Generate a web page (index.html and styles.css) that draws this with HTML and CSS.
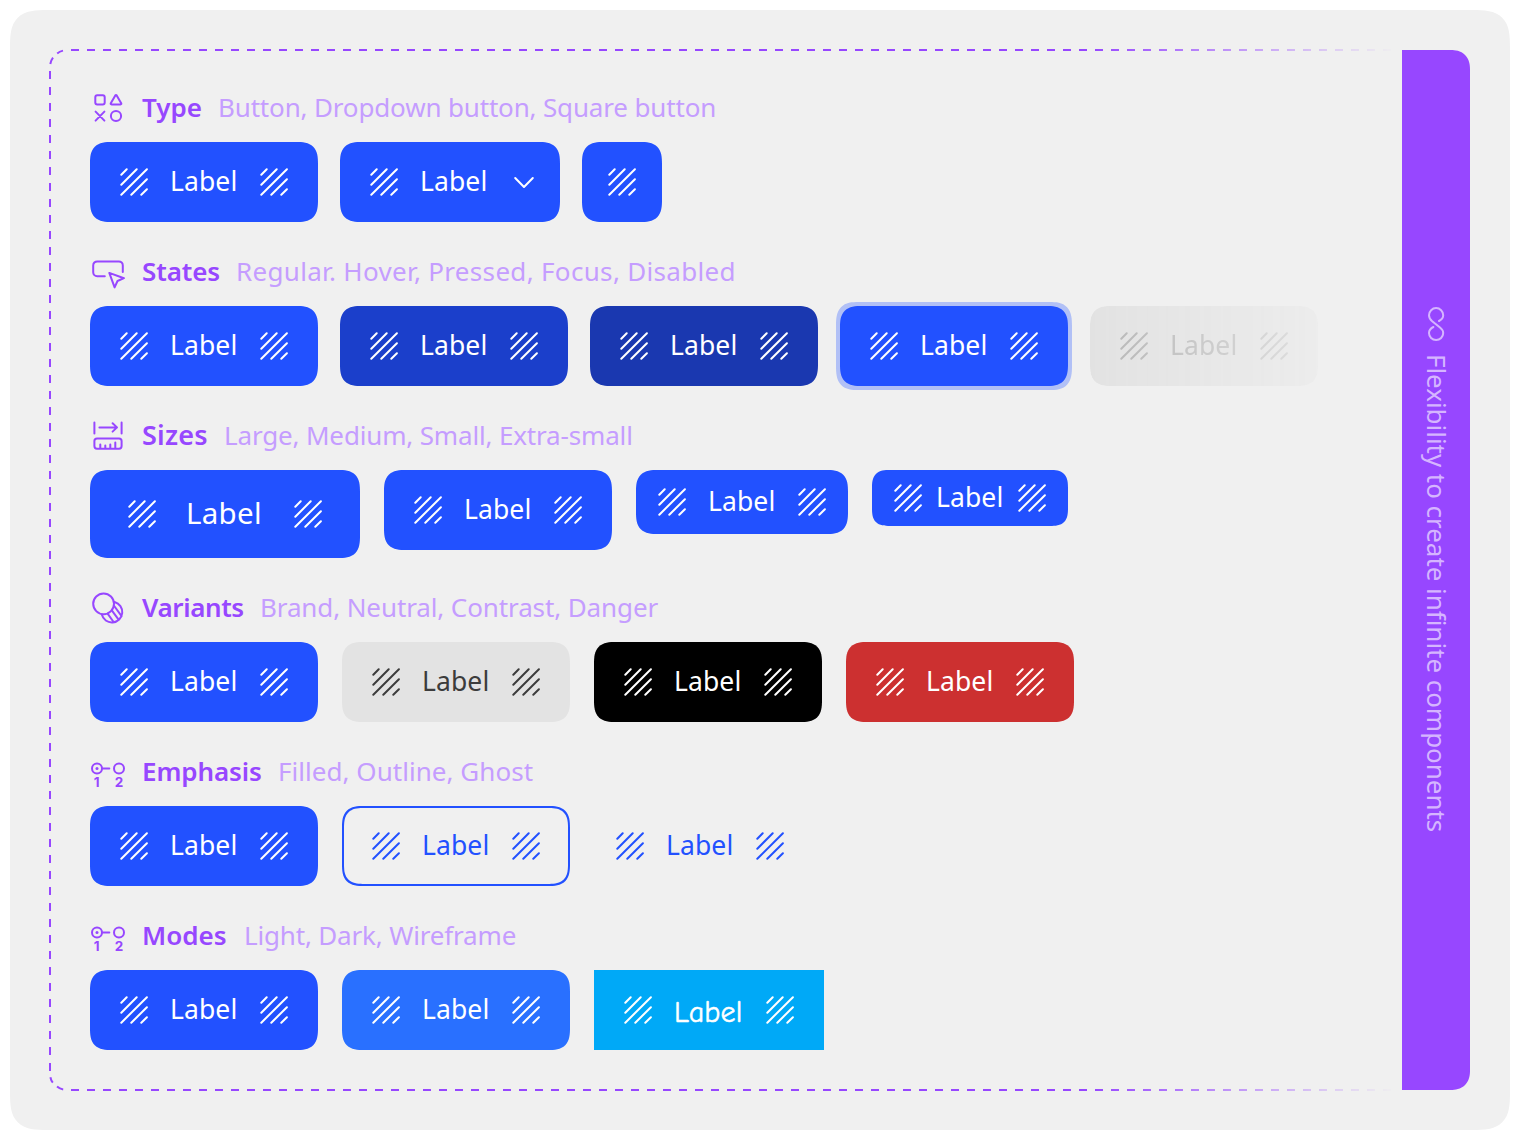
FILE: index.html
```
<!DOCTYPE html>
<html lang="en">
<head>
<meta charset="utf-8">
<title>Button properties</title>
<link rel="stylesheet" href="styles.css">
</head>
<body>
<svg class="defs" aria-hidden="true">
  <symbol id="pattern" viewBox="0 0 28 28"><path d="M1.3 6.7 6.7 1.3M1.3 16.7 16.7 1.3M1.3 26.7 26.9 1.3M11.3 26.7 26.9 11.3M21.3 26.7 26.9 21.3"/></symbol>
  <symbol id="chevron" viewBox="0 0 28 28"><path d="M5.2 10 14 19l8.8-9"/></symbol>
</svg>
<main class="card">
  <div class="board">
    <svg class="frame" viewBox="0 0 1353 1042" aria-hidden="true">
      <path d="M22 1H1400"/><path d="M1 22V1022"/><path d="M22 1041H1400"/>
      <path d="M14 1.6Q10.5 2.4 8.2 4.4M4 8.6Q1.8 11.5 1.3 15M1.4 1028.2Q2 1031.4 3.8 1033.6M8 1037.6Q10.8 1040 14.2 1040.5"/>
    </svg>
    <div class="content">

      <section class="group type">
        <h2 class="heading"><svg class="glyph" viewBox="0 0 36 36"><rect x="5.3" y="5.3" width="9.4" height="9.2" rx="2"/><path d="M25.3 5.4Q26 4.4 26.7 5.4L31.2 13.2Q31.7 14.4 30.5 14.4H21.5Q20.3 14.4 20.8 13.2ZM5.6 21.6 14.4 30.6M14.4 21.6 5.6 30.6"/><circle cx="26" cy="26" r="5.1"/></svg><span class="name">Type</span><span class="values">Button, Dropdown button, Square button</span></h2>
        <div class="row tight">
          <div class="btn"><svg class="icon"><use href="#pattern"/></svg><span class="label">Label</span><svg class="icon"><use href="#pattern"/></svg></div>
          <div class="btn dropdown"><svg class="icon"><use href="#pattern"/></svg><span class="label">Label</span><svg class="icon"><use href="#chevron"/></svg></div>
          <div class="btn square"><svg class="icon"><use href="#pattern"/></svg></div>
        </div>
      </section>

      <section class="group states">
        <h2 class="heading"><svg class="glyph" viewBox="0 0 36 36"><path d="M14.8 22.3H7.2A4 4 0 0 1 3.2 18.3V11.4A4 4 0 0 1 7.2 7.4H28.8A4 4 0 0 1 32.8 11.4V18M19.3 18.9 34 24.2 27.5 27 24.6 33.4Z"/></svg><span class="name">States</span><span class="values">Regular. Hover, Pressed, Focus, Disabled</span></h2>
        <div class="row tight">
          <div class="btn"><svg class="icon"><use href="#pattern"/></svg><span class="label">Label</span><svg class="icon"><use href="#pattern"/></svg></div>
          <div class="btn hover"><svg class="icon"><use href="#pattern"/></svg><span class="label">Label</span><svg class="icon"><use href="#pattern"/></svg></div>
          <div class="btn pressed"><svg class="icon"><use href="#pattern"/></svg><span class="label">Label</span><svg class="icon"><use href="#pattern"/></svg></div>
          <div class="btn focus"><svg class="icon"><use href="#pattern"/></svg><span class="label">Label</span><svg class="icon"><use href="#pattern"/></svg></div>
          <div class="btn disabled"><svg class="icon"><use href="#pattern"/></svg><span class="label">Label</span><svg class="icon"><use href="#pattern"/></svg></div>
        </div>
      </section>

      <section class="group sizes">
        <h2 class="heading"><svg class="glyph" viewBox="0 0 36 36"><path d="M4.4 4.4V15.4M31.6 4.4V15.4M9.4 9.4H27M22.6 5.2 27 9.4 22.6 13.6M10.3 30V26.4M15.3 30V27.6M20.3 30V26.4M25.3 30V24.6"/><rect x="4.4" y="20.5" width="27.2" height="10.2" rx="2.6"/></svg><span class="name">Sizes</span><span class="values">Large, Medium, Small, Extra-small</span></h2>
        <div class="row">
          <div class="btn large"><svg class="icon"><use href="#pattern"/></svg><span class="label">Label</span><svg class="icon"><use href="#pattern"/></svg></div>
          <div class="btn"><svg class="icon"><use href="#pattern"/></svg><span class="label">Label</span><svg class="icon"><use href="#pattern"/></svg></div>
          <div class="btn small"><svg class="icon"><use href="#pattern"/></svg><span class="label">Label</span><svg class="icon"><use href="#pattern"/></svg></div>
          <div class="btn xsmall"><svg class="icon"><use href="#pattern"/></svg><span class="label">Label</span><svg class="icon"><use href="#pattern"/></svg></div>
        </div>
      </section>

      <section class="group variants">
        <h2 class="heading"><svg class="glyph" viewBox="0 0 36 36"><circle cx="13.6" cy="13.8" r="10.4"/><path d="M24.6 12A10.4 10.4 0 1 1 11.8 24.6M24.2 16 31.6 26.2M21.8 20.4 28.6 29.6M17.6 23.6 23.6 32"/></svg><span class="name">Variants</span><span class="values">Brand, Neutral, Contrast, Danger</span></h2>
        <div class="row">
          <div class="btn"><svg class="icon"><use href="#pattern"/></svg><span class="label">Label</span><svg class="icon"><use href="#pattern"/></svg></div>
          <div class="btn neutral"><svg class="icon"><use href="#pattern"/></svg><span class="label">Label</span><svg class="icon"><use href="#pattern"/></svg></div>
          <div class="btn contrast"><svg class="icon"><use href="#pattern"/></svg><span class="label">Label</span><svg class="icon"><use href="#pattern"/></svg></div>
          <div class="btn danger"><svg class="icon"><use href="#pattern"/></svg><span class="label">Label</span><svg class="icon"><use href="#pattern"/></svg></div>
        </div>
      </section>

      <section class="group emphasis">
        <h2 class="heading"><svg class="glyph" viewBox="0 0 36 36"><circle cx="7" cy="14.4" r="5"/><circle class="dot" cx="7" cy="14.4" r="1.5"/><path d="M12.5 14.4H19.3"/><circle cx="29" cy="14.4" r="5"/><text x="6.6" y="33.4">1</text><text x="29" y="33.4">2</text></svg><span class="name">Emphasis</span><span class="values">Filled, Outline, Ghost</span></h2>
        <div class="row">
          <div class="btn"><svg class="icon"><use href="#pattern"/></svg><span class="label">Label</span><svg class="icon"><use href="#pattern"/></svg></div>
          <div class="btn outline"><svg class="icon"><use href="#pattern"/></svg><span class="label">Label</span><svg class="icon"><use href="#pattern"/></svg></div>
          <div class="btn ghost"><svg class="icon"><use href="#pattern"/></svg><span class="label">Label</span><svg class="icon"><use href="#pattern"/></svg></div>
        </div>
      </section>

      <section class="group modes">
        <h2 class="heading"><svg class="glyph" viewBox="0 0 36 36"><circle cx="7" cy="14.4" r="5"/><circle class="dot" cx="7" cy="14.4" r="1.5"/><path d="M12.5 14.4H19.3"/><circle cx="29" cy="14.4" r="5"/><text x="6.6" y="33.4">1</text><text x="29" y="33.4">2</text></svg><span class="name">Modes</span><span class="values">Light, Dark, Wireframe</span></h2>
        <div class="row">
          <div class="btn"><svg class="icon"><use href="#pattern"/></svg><span class="label">Label</span><svg class="icon"><use href="#pattern"/></svg></div>
          <div class="btn dark"><svg class="icon"><use href="#pattern"/></svg><span class="label">Label</span><svg class="icon"><use href="#pattern"/></svg></div>
          <div class="btn wireframe"><svg class="icon"><use href="#pattern"/></svg><span class="label">Label</span><svg class="icon"><use href="#pattern"/></svg></div>
        </div>
      </section>

    </div>
    <aside class="panel">
      <svg class="infinity" viewBox="0 0 36 36"><path d="M21 15C23.6 13.6 25.2 12 25.2 9.2A7.1 7.1 0 0 0 11 9.2C11 12 12.4 13.6 14.2 15.2L22 21.6C24 23.2 25.2 24.8 25.2 27A7.1 7.1 0 0 1 11 27C11 24.2 12.6 22.4 15.4 21"/></svg>
      <span class="motto">Flexibility to create infinite components</span>
    </aside>
  </div>
</main>
</body>
</html>
```
FILE: styles.css
```
:root {
  --brand: #2251ff;
  --purple: #9747ff;
  --surface: #f0f0f0;
}

* { box-sizing: border-box; }

body {
  margin: 0;
  padding: 10px;
  background: #fff;
  font-family: "Proxima Nova", "Noto Sans", sans-serif;
  font-size: 26px;
  line-height: 36px;
}

.defs { position: absolute; width: 0; height: 0; }

svg {
  display: block;
  flex: none;
  fill: none;
  stroke: currentColor;
  stroke-width: 2;
  stroke-linecap: round;
  stroke-linejoin: round;
}

.card {
  width: 1500px;
  height: 1120px;
  padding: 40px;
  border-radius: 38px;
  corner-shape: superellipse(1.6);
  background: var(--surface);
}

.board {
  position: relative;
  display: flex;
  justify-content: space-between;
  height: 1040px;
}

.frame {
  position: absolute;
  left: -1px;
  top: -1px;
  width: 1353px;
  height: 1042px;
  color: var(--purple);
  stroke-linecap: butt;
  stroke-dasharray: 8 8;
  mask-image: linear-gradient(to right, #000 1040px, transparent 1346px);
}

.content {
  display: flex;
  flex-direction: column;
  gap: 32px;
  padding: 40px;
}

.group {
  display: flex;
  flex-direction: column;
  gap: 16px;
}

.heading {
  display: flex;
  height: 36px;
  margin: 0;
  color: var(--purple);
  font-size: 26px;
  font-weight: 600;
  line-height: 34px;
  white-space: nowrap;
}

.glyph { width: 36px; height: 36px; margin-right: 16px; }
.dot { fill: currentColor; stroke: none; }
text {
  fill: currentColor;
  stroke: none;
  font: 700 13.5px Inter, sans-serif;
  text-anchor: middle;
}

.name { margin-right: 16px; }
.values { color: #c59dff; font-weight: 400; }

.type .name { width: 60px; }
.states .name { width: 78px; letter-spacing: -.1px; }
.sizes .name { width: 66px; font-size: 27px; letter-spacing: .25px; }
.variants .name { width: 102px; letter-spacing: -.4px; }
.emphasis .name { width: 120px; letter-spacing: -.1px; }
.modes .name { width: 86px; }
.type .values { letter-spacing: -.16px; }
.states .values { letter-spacing: .32px; }
.sizes .values { letter-spacing: -.16px; }
.variants .values { letter-spacing: -.11px; }
.emphasis .values { letter-spacing: .04px; }
.modes .values { letter-spacing: -.17px; }

.row {
  display: flex;
  align-items: flex-start;
  gap: 24px;
}
.tight { gap: 22px; }

.btn {
  display: flex;
  align-items: center;
  gap: 22px;
  height: 80px;
  padding: 0 30px;
  border-radius: 22px;
  corner-shape: superellipse(1.5);
  background: var(--brand);
  color: #fff;
}

.icon { width: 28px; height: 28px; }

.label {
  width: 68px;
  padding-bottom: 3px;
  font-size: 26.5px;
  font-weight: 400;
  letter-spacing: .1px;
  white-space: nowrap;
}

.dropdown { padding-right: 22px; }
.square { padding: 0 26px; }
.hover { background: #1b3fcb; }
.pressed { background: #1a38b0; }
.focus { box-shadow: 0 0 0 4px #b1c0f6; }
.disabled {
  background: #e2e2e2;
  color: #b4b4b4;
  mask-image: linear-gradient(to right, #000, rgb(0 0 0 / .25));
}
.large { height: 88px; padding: 0 38px; gap: 30px; }
.large .label { width: 78px; padding-bottom: 2px; font-size: 29.5px; letter-spacing: .3px; }
.small { height: 64px; padding: 0 22px; }
.xsmall { height: 56px; padding: 0 22px; gap: 14px; border-radius: 18px; }
.neutral { background: #e3e3e3; color: #3c3c3c; }
.contrast { background: #000; }
.danger { background: #cc3030; }
.outline {
  padding: 0 28px;
  border: 2px solid var(--brand);
  background: none;
  color: var(--brand);
}
.ghost { padding: 0 22px; background: none; color: var(--brand); }
.dark { background: #2970ff; }
.wireframe { border-radius: 0; background: #00a9f7; }
.wireframe .label {
  width: 70px;
  padding: 6px 0 0;
  font-family: "Comic Sans MS", "Comic Neue", "Noto Sans", sans-serif;
  font-size: 30px;
  font-weight: 400;
  letter-spacing: .2px;
  -webkit-text-stroke: .5px currentColor;
}

.panel {
  display: flex;
  flex-direction: column;
  align-items: center;
  width: 68px;
  padding-top: 256px;
  border-radius: 0 19px 19px 0;
  corner-shape: superellipse(1.2);
  background: var(--purple);
  color: #d5b5ff;
}
.infinity { width: 36px; height: 36px; }
.motto {
  margin: 12px 0 0 1px;
  font-weight: 400;
  letter-spacing: -.04px;
  writing-mode: vertical-rl;
  white-space: nowrap;
}
```
